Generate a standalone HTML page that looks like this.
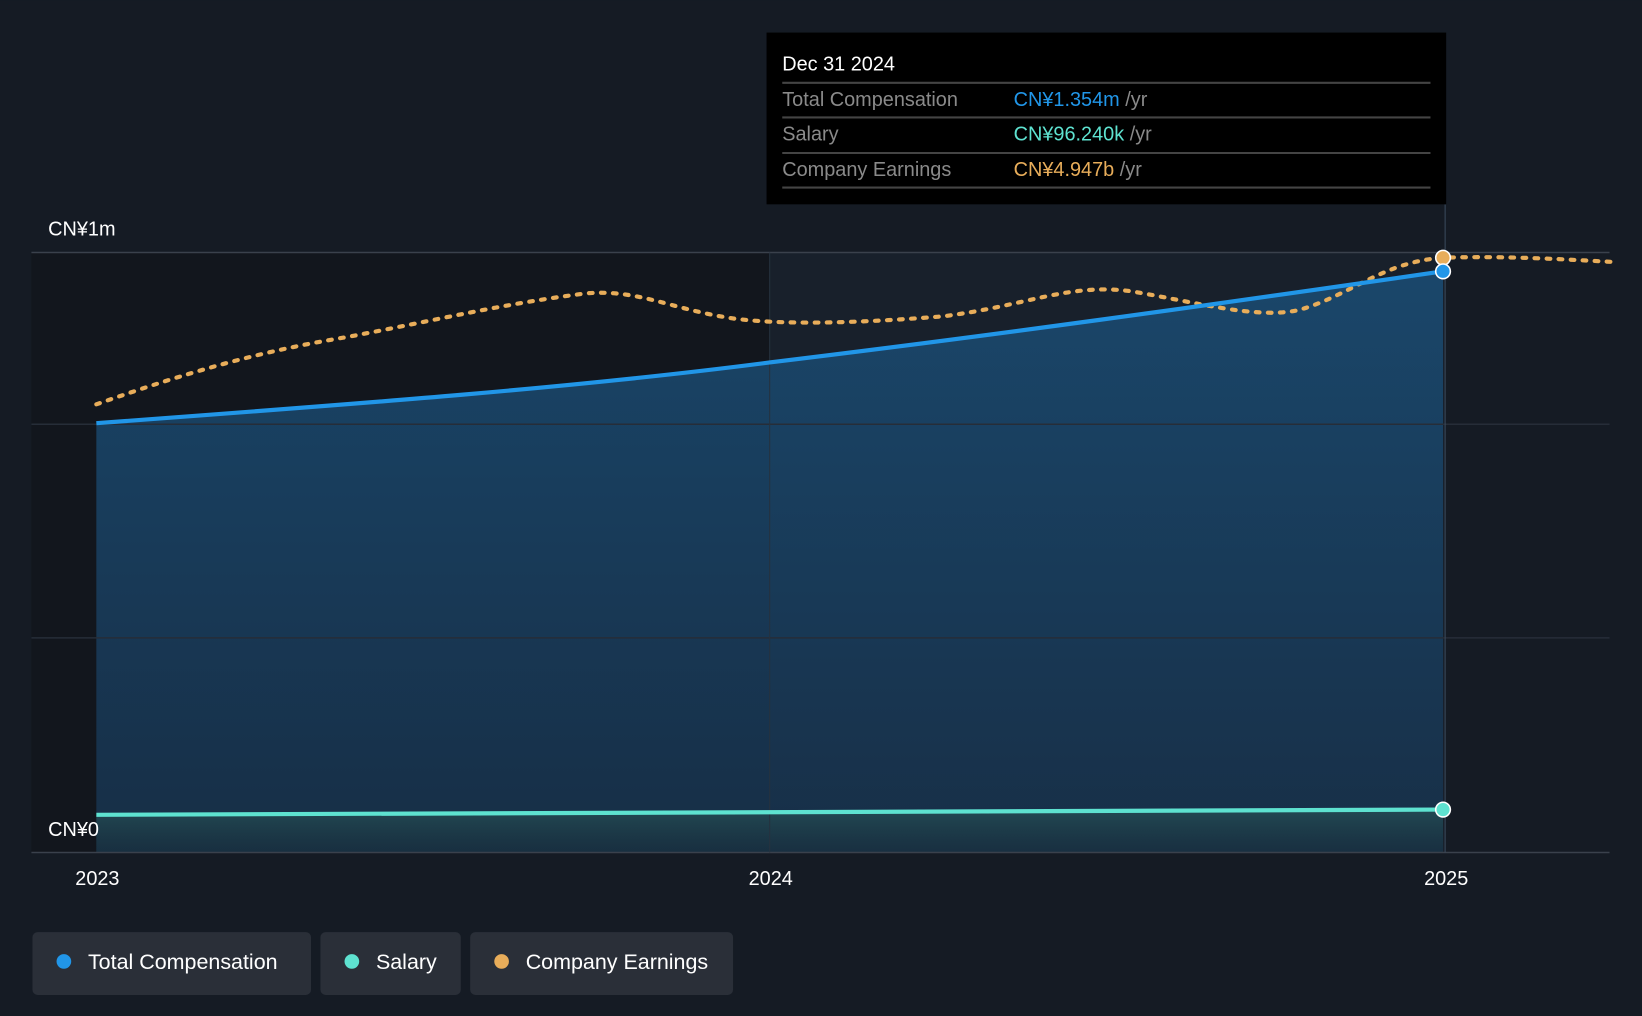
<!DOCTYPE html>
<html><head><meta charset="utf-8"><style>
html,body{margin:0;padding:0;background:#151b24;overflow:hidden}
svg{display:block}
text{font-family:"Liberation Sans",sans-serif}
</style></head><body>
<svg width="1642" height="1016" viewBox="0 0 1568 970" xmlns="http://www.w3.org/2000/svg">
<defs>
<linearGradient id="fill" x1="0" y1="0" x2="0" y2="1">
<stop offset="0" stop-color="#1a4a70" stop-opacity="0.92"/>
<stop offset="1" stop-color="#173049" stop-opacity="0.92"/>
</linearGradient>
<linearGradient id="sfill" x1="0" y1="0" x2="0" y2="1">
<stop offset="0" stop-color="#2a5a5a" stop-opacity="0.6"/>
<stop offset="1" stop-color="#1a3038" stop-opacity="0.4"/>
</linearGradient>
</defs>
<rect width="1568" height="970" fill="#151b24"/>
<rect x="30" y="241" width="705" height="573" fill="#12161d"/>
<rect x="735" y="241" width="645" height="573" fill="#18202b"/>
<path d="M92,404 C350,385 550,370 735,346 C950,320 1150,292 1378,259 L1378,814 L92,814 Z" fill="url(#fill)"/>
<path d="M92,778 L1378,773 L1378,814 L92,814 Z" fill="url(#sfill)"/>
<line x1="30" y1="241" x2="1537" y2="241" stroke="#3a414c" stroke-width="1.5"/>
<line x1="30" y1="405" x2="1537" y2="405" stroke="#262d38" stroke-width="1.5"/>
<line x1="30" y1="609" x2="1537" y2="609" stroke="#262d38" stroke-width="1.5"/>
<line x1="30" y1="814" x2="1537" y2="814" stroke="#3a414c" stroke-width="1.5"/>
<line x1="735" y1="241" x2="735" y2="814" stroke="#26323f" stroke-width="1"/>
<line x1="1380" y1="195" x2="1380" y2="814" stroke="#3a4a5c" stroke-width="1"/>
<path d="M92,386 C180,355 250,335 330,322 C420,305 480,290 560,280 C610,276 640,295 700,304 C760,312 850,306 900,302 C980,292 1020,270 1080,278 C1140,288 1200,305 1240,296 C1290,282 1320,250 1378,246 C1440,244 1500,248 1540,250" fill="none" stroke="#e8ad5a" stroke-width="4" stroke-dasharray="3.5 8" stroke-linecap="round"/>
<path d="M92,404 C350,385 550,370 735,346 C950,320 1150,292 1378,259" fill="none" stroke="#2196e8" stroke-width="4"/>
<path d="M92,778 L1378,773" fill="none" stroke="#5ee2d0" stroke-width="4"/>
<circle cx="1378" cy="246" r="7" fill="#e8ad5a" stroke="#fff" stroke-width="1.5"/>
<circle cx="1378" cy="259" r="7" fill="#2196e8" stroke="#fff" stroke-width="1.5"/>
<circle cx="1378" cy="773" r="7" fill="#5ee2d0" stroke="#fff" stroke-width="1.5"/>
<text x="46" y="225" fill="#fff" font-size="19">CN¥1m</text>
<text x="46" y="798" fill="#fff" font-size="19">CN¥0</text>
<text x="93" y="845" fill="#fff" font-size="19" text-anchor="middle">2023</text>
<text x="736" y="845" fill="#fff" font-size="19" text-anchor="middle">2024</text>
<text x="1381" y="845" fill="#fff" font-size="19" text-anchor="middle">2025</text>
<rect x="732" y="31" width="649" height="164" fill="#000"/>
<text x="747" y="67" fill="#fff" font-size="19">Dec 31 2024</text>
<g stroke="#444" stroke-width="2">
<line x1="747" y1="79" x2="1366" y2="79"/>
<line x1="747" y1="112" x2="1366" y2="112"/>
<line x1="747" y1="146" x2="1366" y2="146"/>
<line x1="747" y1="179" x2="1366" y2="179"/>
</g>
<text x="747" y="101" fill="#8a8a8a" font-size="19">Total Compensation</text>
<text x="968" y="101" font-size="19"><tspan fill="#2196e8">CN¥1.354m</tspan><tspan fill="#8a8a8a"> /yr</tspan></text>
<text x="747" y="134" fill="#8a8a8a" font-size="19">Salary</text>
<text x="968" y="134" font-size="19"><tspan fill="#5ee2d0">CN¥96.240k</tspan><tspan fill="#8a8a8a"> /yr</tspan></text>
<text x="747" y="168" fill="#8a8a8a" font-size="19">Company Earnings</text>
<text x="968" y="168" font-size="19"><tspan fill="#e8ad5a">CN¥4.947b</tspan><tspan fill="#8a8a8a"> /yr</tspan></text>
<rect x="31" y="890" width="266" height="60" rx="5" fill="#2a2f38"/>
<circle cx="61" cy="918" r="7" fill="#2196e8"/>
<text x="84" y="925" fill="#fff" font-size="20.5">Total Compensation</text>
<rect x="306" y="890" width="134" height="60" rx="5" fill="#2a2f38"/>
<circle cx="336" cy="918" r="7" fill="#5ee2d0"/>
<text x="359" y="925" fill="#fff" font-size="20.5">Salary</text>
<rect x="449" y="890" width="251" height="60" rx="5" fill="#2a2f38"/>
<circle cx="479" cy="918" r="7" fill="#e8ad5a"/>
<text x="502" y="925" fill="#fff" font-size="20.5">Company Earnings</text>
</svg>
</body></html>
